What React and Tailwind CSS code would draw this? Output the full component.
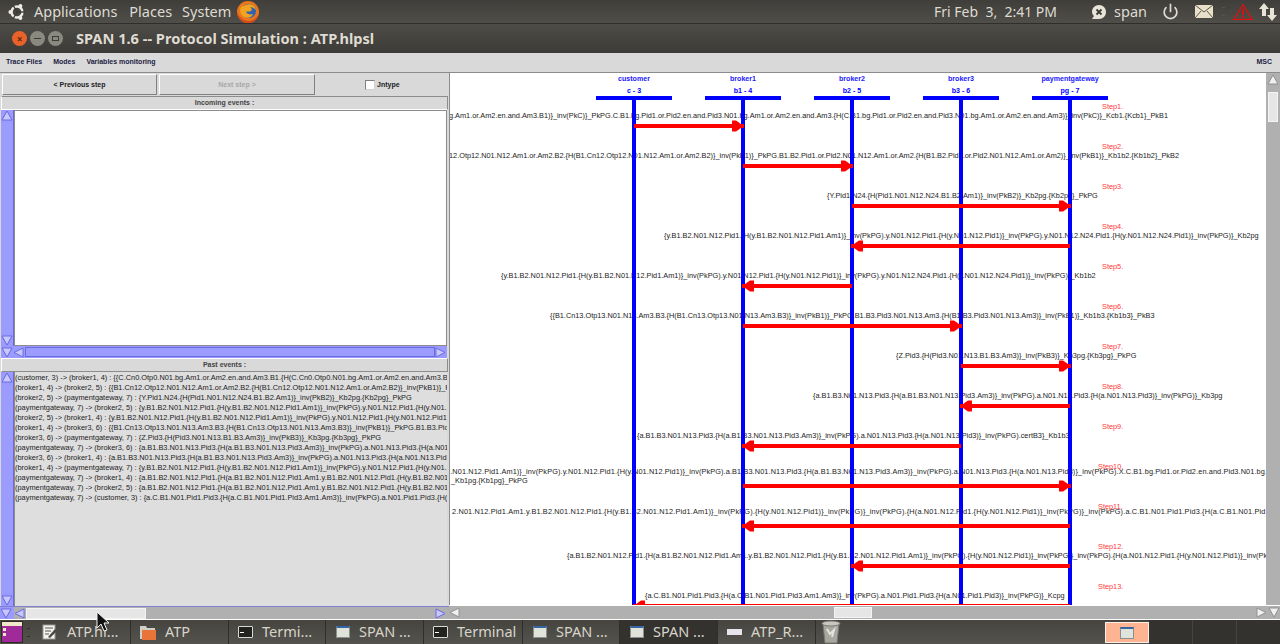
import { Power } from "lucide-react";

const font = { fontFamily: "'Liberation Sans', Arial, sans-serif" };

const actors = [
  { name: "customer", id: "c - 3", x: 184, nameCls: "left-[184px]", idCls: "left-[184px]" },
  { name: "broker1", id: "b1 - 4", x: 293, nameCls: "left-[293px]", idCls: "left-[293px]" },
  { name: "broker2", id: "b2 - 5", x: 402, nameCls: "left-[402px]", idCls: "left-[402px]" },
  { name: "broker3", id: "b3 - 6", x: 511, nameCls: "left-[511px]", idCls: "left-[511px]" },
  { name: "paymentgateway", id: "pg - 7", x: 620, nameCls: "left-[620px]", idCls: "left-[620px]" },
];

const steps = [
  ["Step1.", "left-[652px] top-[28px]"],
  ["Step2.", "left-[652px] top-[68px]"],
  ["Step3.", "left-[652px] top-[108px]"],
  ["Step4.", "left-[652px] top-[148px]"],
  ["Step5.", "left-[652px] top-[188px]"],
  ["Step6.", "left-[652px] top-[228px]"],
  ["Step7.", "left-[652px] top-[268px]"],
  ["Step8.", "left-[652px] top-[308px]"],
  ["Step9.", "left-[652px] top-[348px]"],
  ["Step10.", "left-[648px] top-[388px]"],
  ["Step11.", "left-[648px] top-[428px]"],
  ["Step12.", "left-[648px] top-[468px]"],
  ["Step13.", "left-[648px] top-[508px]"],
];

const messages = [
  ["{{C.Cn0.Otp0.N01.bg.Am1.or.Am2.en.and.Am3.B1.{H(C.Cn0.Otp0.N01.bg.Am1.or.Am2.en.and.Am3.B1)}_inv(PkC)}_PkPG.C.B1.bg.Pid1.or.Pid2.en.and.Pid3.N01.bg.Am1.or.Am2.en.and.Am3.{H(C.B1.bg.Pid1.or.Pid2.en.and.Pid3.N01.bg.Am1.or.Am2.en.and.Am3)}_inv(PkC)}_Kcb1.{Kcb1}_PkB1", "right-[98px] top-[37px]"],
  ["{{B1.Cn12.Otp12.N01.N12.Am1.or.Am2.B2.{H(B1.Cn12.Otp12.N01.N12.Am1.or.Am2.B2)}_inv(PkB1)}_PkPG.B1.B2.Pid1.or.Pid2.N01.N12.Am1.or.Am2.{H(B1.B2.Pid1.or.Pid2.N01.N12.Am1.or.Am2)}_inv(PkB1)}_Kb1b2.{Kb1b2}_PkB2", "right-[87px] top-[77px]"],
  ["{Y.Pid1.N24.{H(Pid1.N01.N12.N24.B1.B2.Am1)}_inv(PkB2)}_Kb2pg.{Kb2pg}_PkPG", "left-[377px] top-[117px]"],
  ["{y.B1.B2.N01.N12.Pid1.{H(y.B1.B2.N01.N12.Pid1.Am1)}_inv(PkPG).y.N01.N12.Pid1.{H(y.N01.N12.Pid1)}_inv(PkPG).y.N01.N12.N24.Pid1.{H(y.N01.N12.N24.Pid1)}_inv(PkPG)}_Kb2pg", "left-[214px] top-[157px]"],
  ["{y.B1.B2.N01.N12.Pid1.{H(y.B1.B2.N01.N12.Pid1.Am1)}_inv(PkPG).y.N01.N12.Pid1.{H(y.N01.N12.Pid1)}_inv(PkPG).y.N01.N12.N24.Pid1.{H(y.N01.N12.N24.Pid1)}_inv(PkPG)}_Kb1b2", "left-[51px] top-[197px]"],
  ["{{B1.Cn13.Otp13.N01.N13.Am3.B3.{H(B1.Cn13.Otp13.N01.N13.Am3.B3)}_inv(PkB1)}_PkPG.B1.B3.Pid3.N01.N13.Am3.{H(B1.B3.Pid3.N01.N13.Am3)}_inv(PkB1)}_Kb1b3.{Kb1b3}_PkB3", "left-[100px] top-[237px]"],
  ["{Z.Pid3.{H(Pid3.N01.N13.B1.B3.Am3)}_inv(PkB3)}_Kb3pg.{Kb3pg}_PkPG", "left-[446px] top-[277px]"],
  ["{a.B1.B3.N01.N13.Pid3.{H(a.B1.B3.N01.N13.Pid3.Am3)}_inv(PkPG).a.N01.N13.Pid3.{H(a.N01.N13.Pid3)}_inv(PkPG)}_Kb3pg", "left-[363px] top-[317px]"],
  ["{a.B1.B3.N01.N13.Pid3.{H(a.B1.B3.N01.N13.Pid3.Am3)}_inv(PkPG).a.N01.N13.Pid3.{H(a.N01.N13.Pid3)}_inv(PkPG).certB3}_Kb1b3", "left-[187px] top-[357px]"],
  ["2.N01.N12.Pid1.Am1)}_inv(PkPG).y.N01.N12.Pid1.{H(y.N01.N12.Pid1)}_inv(PkPG).a.B1.B3.N01.N13.Pid3.{H(a.B1.B3.N01.N13.Pid3.Am3)}_inv(PkPG).a.N01.N13.Pid3.{H(a.N01.N13.Pid3)}_inv(PkPG).X.C.B1.bg.Pid1.or.Pid2.en.and.Pid3.N01.bg.Am1.or.Am2", "left-[-4px] top-[393px] tracking-[0.11px]"],
  ["_Kb1pg.{Kb1pg}_PkPG", "left-[1px] top-[402px]"],
  ["2.N01.N12.Pid1.Am1.y.B1.B2.N01.N12.Pid1.{H(y.B1.B2.N01.N12.Pid1.Am1)}_inv(PkPG).{H(y.N01.N12.Pid1)}_inv(PkPG)}_inv(PkPG).{H(a.N01.N12.Pid1.{H(y.N01.N12.Pid1)}_inv(PkPG)}_inv(PkPG).a.C.B1.N01.Pid1.Pid3.{H(a.C.B1.N01.Pid1.Pid3.Am1", "left-[2px] top-[433px] tracking-[0.16px]"],
  ["{a.B1.B2.N01.N12.Pid1.{H(a.B1.B2.N01.N12.Pid1.Am1.y.B1.B2.N01.N12.Pid1.{H(y.B1.B2.N01.N12.Pid1.Am1)}_inv(PkPG).{H(y.N01.N12.Pid1)}_inv(PkPG)}_inv(PkPG).{H(a.N01.N12.Pid1.{H(y.N01.N12.Pid1)}_inv(PkPG)", "left-[117px] top-[477px]"],
  ["{a.C.B1.N01.Pid1.Pid3.{H(a.C.B1.N01.Pid1.Pid3.Am1.Am3)}_inv(PkPG).a.N01.Pid1.Pid3.{H(a.N01.Pid1.Pid3)}_inv(PkPG)}_Kcpg", "left-[195px] top-[517px]"],
];

// y is in canvas coords (origin 450,73)
const arrows = [
  [184, 293, 53],
  [293, 402, 93],
  [402, 620, 133],
  [620, 402, 173],
  [402, 293, 213],
  [293, 511, 253],
  [511, 620, 293],
  [620, 511, 333],
  [511, 293, 373],
  [293, 620, 413],
  [620, 293, 453],
  [620, 402, 493],
  [620, 184, 533],
];

const pastEvents = [
  "(customer, 3) -> (broker1, 4) : {{C.Cn0.Otp0.N01.bg.Am1.or.Am2.en.and.Am3.B1.{H(C.Cn0.Otp0.N01.bg.Am1.or.Am2.en.and.Am3.B1)}_inv(PkC)}_PkPG",
  "(broker1, 4) -> (broker2, 5) : {{B1.Cn12.Otp12.N01.N12.Am1.or.Am2.B2.{H(B1.Cn12.Otp12.N01.N12.Am1.or.Am2.B2)}_inv(PkB1)}_PkPG.B1.B2",
  "(broker2, 5) -> (paymentgateway, 7) : {Y.Pid1.N24.{H(Pid1.N01.N12.N24.B1.B2.Am1)}_inv(PkB2)}_Kb2pg.{Kb2pg}_PkPG",
  "(paymentgateway, 7) -> (broker2, 5) : {y.B1.B2.N01.N12.Pid1.{H(y.B1.B2.N01.N12.Pid1.Am1)}_inv(PkPG).y.N01.N12.Pid1.{H(y.N01.N12.Pid1)}",
  "(broker2, 5) -> (broker1, 4) : {y.B1.B2.N01.N12.Pid1.{H(y.B1.B2.N01.N12.Pid1.Am1)}_inv(PkPG).y.N01.N12.Pid1.{H(y.N01.N12.Pid1)}_inv(PkPG)",
  "(broker1, 4) -> (broker3, 6) : {{B1.Cn13.Otp13.N01.N13.Am3.B3.{H(B1.Cn13.Otp13.N01.N13.Am3.B3)}_inv(PkB1)}_PkPG.B1.B3.Pid3.N01.N13",
  "(broker3, 6) -> (paymentgateway, 7) : {Z.Pid3.{H(Pid3.N01.N13.B1.B3.Am3)}_inv(PkB3)}_Kb3pg.{Kb3pg}_PkPG",
  "(paymentgateway, 7) -> (broker3, 6) : {a.B1.B3.N01.N13.Pid3.{H(a.B1.B3.N01.N13.Pid3.Am3)}_inv(PkPG).a.N01.N13.Pid3.{H(a.N01.N13.Pid3)}",
  "(broker3, 6) -> (broker1, 4) : {a.B1.B3.N01.N13.Pid3.{H(a.B1.B3.N01.N13.Pid3.Am3)}_inv(PkPG).a.N01.N13.Pid3.{H(a.N01.N13.Pid3)}_inv(PkPG)",
  "(broker1, 4) -> (paymentgateway, 7) : {y.B1.B2.N01.N12.Pid1.{H(y.B1.B2.N01.N12.Pid1.Am1)}_inv(PkPG).y.N01.N12.Pid1.{H(y.N01.N12.Pid1)}",
  "(paymentgateway, 7) -> (broker1, 4) : {a.B1.B2.N01.N12.Pid1.{H(a.B1.B2.N01.N12.Pid1.Am1.y.B1.B2.N01.N12.Pid1.{H(y.B1.B2.N01.N12.Pid1",
  "(paymentgateway, 7) -> (broker2, 5) : {a.B1.B2.N01.N12.Pid1.{H(a.B1.B2.N01.N12.Pid1.Am1.y.B1.B2.N01.N12.Pid1.{H(y.B1.B2.N01.N12.Pid1",
  "(paymentgateway, 7) -> (customer, 3) : {a.C.B1.N01.Pid1.Pid3.{H(a.C.B1.N01.Pid1.Pid3.Am1.Am3)}_inv(PkPG).a.N01.Pid1.Pid3.{H(a.N01.Pid1",
];

function Tri({ dir, fill = "#b8b8ff", stroke = "#6a6ae0", className = "" }) {
  const pts = {
    up: "6,1 11,10 1,10",
    down: "1,1 11,1 6,10",
    left: "1,5.5 10,1 10,10",
    right: "10,5.5 1,1 1,10",
  }[dir];
  return (
    <svg width="12" height="11" viewBox="0 0 12 11" className={"shrink-0 " + className}>
      <polygon points={pts} fill={fill} stroke={stroke} strokeWidth="1" />
    </svg>
  );
}

function PurpleV() {
  return (
    <div className="w-[13px] ml-[1px] shrink-0 flex flex-col bg-[#9a9aff] border-r border-[#6a6ae0]">
      <Tri dir="up" fill="#c8c8ff" />
      <div className="flex-1 bg-[#9c9cff] mt-[2px] mb-[2px]" />
      <Tri dir="down" fill="#c8c8ff" />
    </div>
  );
}

function Arrow({ from, to, y }) {
  const d = to > from ? 1 : -1;
  const t = to;
  const head = [
    [t + d, y - 2],
    [t - d * 2, y - 2],
    [t - d * 7, y - 5.5],
    [t - d * 11, y - 5.5],
    [t - d * 11, y + 5.5],
    [t - d * 7, y + 5.5],
    [t - d * 2, y + 2],
    [t + d, y + 2],
  ]
    .map((p) => p.join(","))
    .join(" ");
  return (
    <g fill="#ff0000">
      <rect x={Math.min(from, to)} y={y - 2} width={Math.abs(to - from)} height="4" />
      <polygon points={head} />
    </g>
  );
}

function Canvas() {
  return (
    <div className="relative flex-1 bg-white overflow-hidden border-l border-t border-[#8c8c8c] text-[7.33px] leading-[10px] whitespace-nowrap">
      <div className="absolute left-0 right-0 bottom-0 top-[1px]">
        {messages.map(([text, pos]) => (
          <span key={pos} className={"absolute text-[#222222] " + pos}>
            {text}
          </span>
        ))}
        {steps.map(([text, pos]) => (
          <span key={pos} className={"absolute text-[#ff3838] " + pos}>
            {text}
          </span>
        ))}
        {actors.map((a) => (
          <div key={a.name}>
            <span className={"absolute top-[0px] -translate-x-1/2 text-[7.1px] text-[#2020ff] font-bold " + a.nameCls}>{a.name}</span>
            <span className={"absolute top-[12px] -translate-x-1/2 text-[7.1px] text-[#0000ff] font-bold " + a.idCls}>{a.id}</span>
          </div>
        ))}
      </div>
      <svg className="absolute left-0 top-0" width="816" height="532">
        {actors.map((a) => (
          <g key={a.name} fill="#0000ff">
            <rect x={a.x - 38} y="23" width="76" height="4" />
            <rect x={a.x - 2} y="23" width="4" height="510" />
          </g>
        ))}
        {arrows.map(([f, t, y]) => (
          <Arrow key={y} from={f} to={t} y={y} />
        ))}
      </svg>
    </div>
  );
}

function LeftPanel() {
  return (
    <div className="w-[449px] shrink-0 flex flex-col border-t border-[#8c8c8c] text-[7px] leading-[10px] whitespace-nowrap text-[#222222]">
      <div className="h-[23px] flex items-stretch gap-[2px] pl-[2px] pt-[1px]">
        <div className="w-[155px] h-[21px] flex items-center justify-center font-bold border border-t-white border-l-white border-r-[#808080] border-b-[#808080]">
          &lt; Previous step
        </div>
        <div className="w-[156px] h-[21px] flex items-center justify-center font-bold text-[#a8a8a8] border border-t-white border-l-white border-r-[#808080] border-b-[#808080]">
          Next step &gt;
        </div>
        <div className="flex items-center ml-[48px] h-[21px]">
          <div className="w-[10px] h-[10px] bg-white border border-t-[#808080] border-l-[#808080] border-r-[#d0d0d0] border-b-[#d0d0d0]" />
          <span className="ml-[2px] font-bold">Jntype</span>
        </div>
      </div>
      <div className="h-[14px] mx-[1px] flex items-center justify-center font-bold text-[#444444] border border-t-[#8c8c8c] border-l-white border-r-[#8c8c8c] border-b-white">
        Incoming events :
      </div>
      <div className="h-[236px] flex">
        <PurpleV />
        <div className="flex-1 bg-white border border-[#8c8c8c] mr-[2px]" />
      </div>
      <div className="h-[12px] flex items-center bg-[#9a9aff] ml-[1px] mr-[2px]">
        <Tri dir="down" fill="#c8c8ff" />
        <Tri dir="left" fill="#c8c8ff" />
        <div className="flex-1 h-[10px] bg-[#9c9cff] border border-[#6a6ae0]" />
        <Tri dir="right" fill="#c8c8ff" />
      </div>
      <div className="h-[14px] mx-[1px] flex items-center justify-center font-bold text-[#444444] border border-t-white border-l-white border-r-[#8c8c8c] border-b-[#8c8c8c]">
        Past events :
      </div>
      <div className="flex-1 flex min-h-0">
        <PurpleV />
        <div className="flex-1 min-w-0 bg-[#dedede] overflow-hidden border-l border-[#8c8c8c] pt-[1px] mr-[2px] text-[7.4px]">
          {pastEvents.map((e) => (
            <div key={e} className="h-[10px]">
              {e}
            </div>
          ))}
        </div>
      </div>
      <div className="h-[13px] flex items-center bg-[#b0b0b0] border-t border-[#8080d0]">
        <div className="w-[14px] h-full flex items-center bg-[#9a9aff]">
          <Tri dir="down" fill="#c8c8ff" />
        </div>
        <Tri dir="left" fill="#c8c8ff" />
        <div className="w-[120px] h-[11px] bg-[#e6e6e6] border border-[#f4f4f4]" />
        <div className="flex-1" />
        <Tri dir="right" fill="#c8c8ff" />
        <div className="w-[2px]" />
      </div>
    </div>
  );
}

function RightPane() {
  return (
    <div className="flex-1 flex flex-col min-w-0">
      <div className="flex-1 flex min-h-0">
        <Canvas />
        <div className="w-[14px] shrink-0 bg-[#b0b0b0] flex flex-col items-center border-t border-[#8c8c8c] pt-[1px]">
          <Tri dir="up" fill="#f0f0f0" stroke="#909090" />
          <div className="w-[10px] h-[30px] mt-[7px] bg-[#e6e6e6] border border-[#f4f4f4]" />
        </div>
      </div>
      <div className="h-[14px] flex items-center bg-[#b0b0b0] border-t border-white">
        <Tri dir="left" fill="#f0f0f0" stroke="#909090" />
        <div className="w-[38px] h-[11px] ml-[373px] bg-[#e6e6e6] border border-[#f4f4f4]" />
        <div className="flex-1" />
        <Tri dir="right" fill="#f0f0f0" stroke="#909090" />
        <Tri dir="down" fill="#f0f0f0" stroke="#909090" />
      </div>
    </div>
  );
}

function UbuntuLogo() {
  return (
    <svg width="18" height="18" viewBox="0 0 18 18" className="shrink-0">
      <circle cx="9" cy="9" r="5.5" fill="none" stroke="#efebe4" strokeWidth="2.4" />
      <g fill="#3c3b37" stroke="#3c3b37" strokeWidth="1.4">
        <line x1="9" y1="9" x2="17" y2="9" />
        <line x1="9" y1="9" x2="5" y2="2" />
        <line x1="9" y1="9" x2="5" y2="16" />
      </g>
      <circle cx="2.4" cy="9" r="2" fill="#efebe4" />
      <circle cx="12.4" cy="3" r="2" fill="#efebe4" />
      <circle cx="12.4" cy="15" r="2" fill="#efebe4" />
    </svg>
  );
}

function FirefoxLogo() {
  return (
    <svg width="24" height="24" viewBox="0 0 24 24" className="shrink-0">
      <circle cx="12" cy="12" r="11" fill="#e8761c" />
      <circle cx="13" cy="11" r="7" fill="#2f63b0" />
      <path d="M10 5c4-2 9 0 10 5-2-2-4-3-6-3 2 1 2 3 1 4-2 1-4 0-5 1 1 2 4 3 7 2-1 3-5 5-9 3-3-2-5-6-3-10z" fill="#f2a41f" />
      <path d="M1 12c0 6 5 11 11 11s10-4 11-10c-2 5-6 8-11 8S3 17 1 12z" fill="#d4481a" />
    </svg>
  );
}

function TopPanel() {
  return (
    <div className="h-[24px] shrink-0 flex items-center bg-gradient-to-b from-[#3f3e3a] to-[#4f4e49] border-b border-[#2f2e2b] text-[#dfdbd2] text-[14.5px] whitespace-nowrap" style={{ fontFamily: "'Noto Sans', sans-serif" }}>
      <div className="w-[34px] flex justify-center">
        <UbuntuLogo />
      </div>
      <span>Applications</span>
      <span className="ml-[12px]">Places</span>
      <span className="ml-[10px]">System</span>
      <div className="ml-[5px]">
        <FirefoxLogo />
      </div>
      <span className="ml-auto text-[14px]">Fri Feb&nbsp; 3,&nbsp; 2:41 PM</span>
      <svg width="18" height="18" viewBox="0 0 18 18" className="ml-[33px] shrink-0">
        <path d="M9 2c4 0 7 3 7 7s-3 7-7 7H2l2-3c-1-1-2-2.500-2-4 0-4 3-7 7-7z" fill="#e8e4d8" />
        <path d="M6.500 6.500l5 5M11.500 6.500l-5 5" stroke="#3c3b37" strokeWidth="1.800" />
      </svg>
      <span className="ml-[6px]">span</span>
      <Power size={17} className="ml-[15px]" strokeWidth={2.4} />
      <svg width="18" height="13" viewBox="0 0 18 13" className="ml-[16px] shrink-0">
        <rect width="18" height="13" fill="#e8e0c8" />
        <path d="M0 0l9 7 9-7M0 13l6-7M18 13l-6-7" fill="none" stroke="#5a5850" strokeWidth="1" />
      </svg>
      <div className="ml-[9px] w-[3px] h-[9px] border-y border-[#55544f]" />
      <svg width="20" height="18" viewBox="0 0 22 19" className="ml-[8px] shrink-0">
        <polygon points="11,1.5 21,17.5 1,17.5" fill="none" stroke="#e01010" strokeWidth="1.4" />
        <rect x="10" y="6" width="2" height="7" fill="#e01010" />
        <rect x="10" y="14" width="2" height="2" fill="#e01010" />
      </svg>
      <svg width="20" height="20" viewBox="0 0 20 20" className="ml-[5px] mr-[2px] shrink-0" fill="#e8e4d8">
        <polygon points="6,1 11,7 8,7 8,14 4,14 4,7 1,7" />
        <polygon points="14,19 19,13 16,13 16,6 12,6 12,13 9,13" />
      </svg>
    </div>
  );
}

function TitleBar() {
  return (
    <div className="h-[29px] shrink-0 flex items-center pl-[12px] bg-gradient-to-b from-[#4d4c47] to-[#3c3b37] text-[#dfdbd2] text-[14.6px] font-bold whitespace-nowrap" style={{ fontFamily: "'Noto Sans', sans-serif" }}>
      <div className="w-[15px] h-[15px] rounded-full bg-[#e9622a] flex items-center justify-center">
        <span className="text-[#5a2a10] text-[10px] leading-none">×</span>
      </div>
      <div className="w-[15px] h-[15px] rounded-full bg-[#8a8980] ml-[3px] flex items-center justify-center">
        <div className="w-[7px] h-[1px] bg-[#3c3b37]" />
      </div>
      <div className="w-[15px] h-[15px] rounded-full bg-[#8a8980] ml-[3px] flex items-center justify-center">
        <div className="w-[7px] h-[5px] border border-[#3c3b37]" />
      </div>
      <span className="ml-[13px]">SPAN 1.6 -- Protocol Simulation : ATP.hlpsl</span>
    </div>
  );
}

function MenuBar() {
  return (
    <div className="h-[19px] shrink-0 flex items-center pl-[6px] pr-[8px] bg-[#d9d9d9] text-[#222244] text-[7px] font-bold whitespace-nowrap" style={font}>
      <span>Trace Files</span>
      <span className="ml-[11px]">Modes</span>
      <span className="ml-[11px]">Variables monitoring</span>
      <span className="ml-auto">MSC</span>
    </div>
  );
}

function TermIcon() {
  return (
    <div className="w-[15px] h-[12px] bg-[#22221f] border border-[#d8d8d8] rounded-[1px] flex items-center pl-[1px] shrink-0">
      <div className="w-[4px] h-[1px] bg-white" />
    </div>
  );
}

function WinIcon() {
  return <div className="w-[14px] h-[12px] shrink-0 bg-[#dfe3da] border border-[#8a8f92] border-t-2 border-t-[#3465a4]" />;
}

function TextIcon() {
  return (
    <svg width="16" height="16" viewBox="0 0 16 16" className="shrink-0">
      <rect x="1" y="1" width="12" height="14" fill="#f4f4f0" stroke="#9a9a94" />
      <path d="M3 4h8M3 7h6M3 10h4" stroke="#55544f" />
      <path d="M6 13l7-8 2 2-7 7z" fill="#4a4a45" />
    </svg>
  );
}

function FolderIcon() {
  return (
    <svg width="16" height="15" viewBox="0 0 16 15" className="shrink-0">
      <path d="M0 1h6l1 2h8v11H0z" fill="#cfcfc8" />
      <path d="M2 5h14v10H2z" fill="#e8743a" />
    </svg>
  );
}

function Task({ icon, label, className, active }) {
  return (
    <div className={"h-full flex items-center border-r border-[#2f2e2b] " + className + (active ? " bg-[#33322e]" : "")}>
      {icon}
      <span className="ml-[9px]">{label}</span>
    </div>
  );
}

function TaskBar() {
  return (
    <div className="h-[25px] shrink-0 flex items-stretch bg-gradient-to-b from-[#45443f] to-[#54534d] border-t border-white text-[#d8d4ca] text-[14.5px] whitespace-nowrap" style={{ fontFamily: "'Noto Sans', sans-serif" }}>
      <div className="w-[22px] h-[22px] mt-[1px] ml-[1px] bg-[#a12a9a] border border-[#2c2b28] flex flex-col">
        <div className="h-[4px] bg-[#f0e8c8]" />
        <div className="flex-1 flex flex-col gap-[2px] pl-[1px] pt-[2px]">
          <div className="w-[3px] h-[3px] bg-[#f0e8c8]" />
          <div className="w-[3px] h-[3px] bg-[#f0e8c8]" />
        </div>
      </div>
      <div className="w-[3px] h-[9px] ml-[4px] mt-[8px] border-y border-[#2f2e2b]" />
      <div className="w-[12px]" />
      <Task icon={<TextIcon />} label="ATP.hl..." className="w-[89px]" />
      <Task icon={<FolderIcon />} label="ATP" className="w-[98px] pl-[9px]" />
      <Task icon={<TermIcon />} label="Termi..." className="w-[97px] pl-[9px]" />
      <Task icon={<WinIcon />} label="SPAN ..." className="w-[98px] pl-[10px]" />
      <Task icon={<TermIcon />} label="Terminal" className="w-[99px] pl-[9px]" />
      <Task icon={<WinIcon />} label="SPAN ..." className="w-[97px] pl-[10px]" />
      <Task icon={<WinIcon />} label="SPAN ..." className="w-[98px] pl-[10px]" active />
      <Task
        icon={
          <div className="w-[15px] h-[6px] bg-[#e8e4ec] shrink-0" />
        }
        label="ATP_R..."
        className="w-[98px] pl-[9px]"
      />
      <svg width="20" height="24" viewBox="0 0 20 24" className="ml-[5px] shrink-0">
        <path d="M2 4h16l-2 19H4z" fill="#a8a8a0" stroke="#7a7a72" />
        <ellipse cx="10" cy="3.5" rx="9" ry="2.5" fill="#c8c8c0" stroke="#7a7a72" />
        <path d="M6 9l3 5 4-4-2 7" fill="none" stroke="#e4e4dc" strokeWidth="2" />
      </svg>
      <div className="w-[264px]" />
      <div className="w-[44px] h-[21px] mt-[2px] bg-[#feb392] border border-[#f8f0e8] flex items-center justify-center">
        <WinIcon />
      </div>
      <div className="flex-1 flex bg-[#33322e]">
        <div className="w-[44px] border-r border-[#45443f]" />
        <div className="w-[44px] border-r border-[#45443f]" />
      </div>
    </div>
  );
}

export default function App() {
  return (
    <div className="relative w-[1280px] h-[644px] flex flex-col overflow-hidden bg-[#d9d9d9]" style={font}>
      <TopPanel />
      <TitleBar />
      <MenuBar />
      <div className="flex-1 flex min-h-0">
        <LeftPanel />
        <RightPane />
      </div>
      <TaskBar />
      <svg width="14" height="22" viewBox="0 0 14 22" className="absolute left-[96px] top-[611px]">
        <path d="M1 1v16l4-4 3 7 3-1-3-7h5z" fill="#111111" stroke="#f4f4f4" strokeWidth="1" />
      </svg>
    </div>
  );
}
